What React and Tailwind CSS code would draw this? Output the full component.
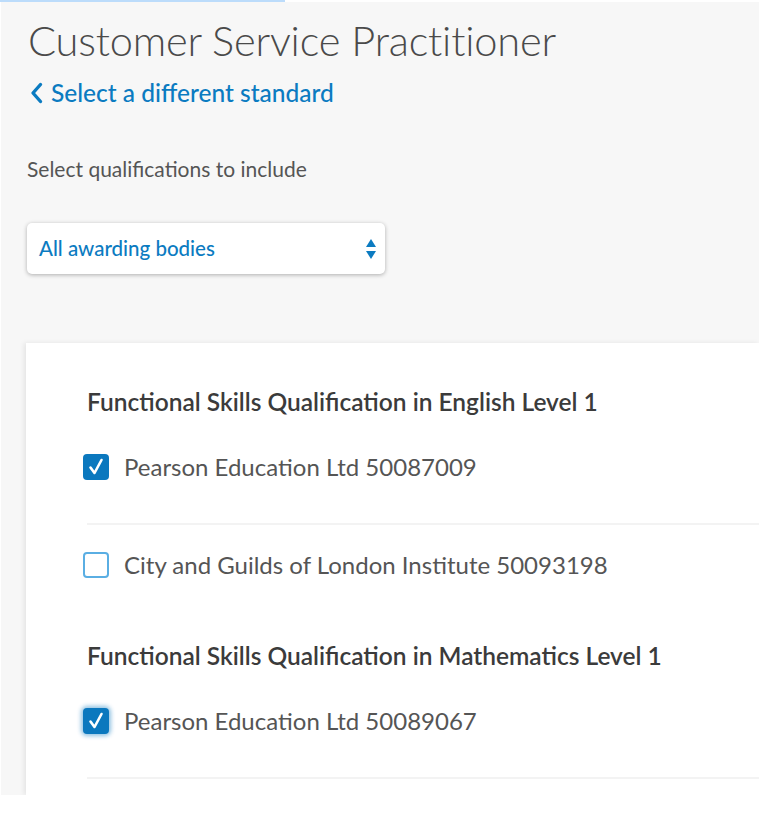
const groups = [
  {
    title: 'Functional Skills Qualification in English Level 1',
    items: [
      { label: 'Pearson Education Ltd 50087009', checked: true },
      { label: 'City and Guilds of London Institute 50093198', checked: false },
    ],
  },
  {
    title: 'Functional Skills Qualification in Mathematics Level 1',
    items: [{ label: 'Pearson Education Ltd 50089067', checked: true, focus: true, last: true }],
  },
]

function Checkbox({ checked, focus }) {
  if (!checked) {
    return <span className="w-[26px] h-[26px] rounded-[4px] border-2 border-[#5aaee3] bg-white flex-shrink-0" />
  }
  return (
    <span
      className={`w-[26px] h-[26px] rounded-[4px] bg-[#0b78be] flex items-center justify-center flex-shrink-0 ${
        focus ? 'shadow-[0_0_4px_2px_rgba(11,120,190,0.45)]' : ''
      }`}
    >
      <svg width="16" height="18" viewBox="0 0 16 18" fill="none">
        <path d="M2.5 9.5 L6.5 15 L13.5 2" stroke="white" strokeWidth="2.6" strokeLinecap="round" strokeLinejoin="round" />
      </svg>
    </span>
  )
}

export default function App() {
  return (
    <div className="w-[762px] h-[822px] bg-white overflow-hidden" style={{ fontFamily: 'Lato, "Open Sans", sans-serif' }}>
      <div className="w-[285px] h-[2px] bg-[#bcdcfb]" />
      <div className="ml-[1px] w-[758px] h-[793px] bg-[#f7f7f7] flex flex-col overflow-hidden">
        <h1 className="ml-[27px] mt-[14px] text-[41.6px] leading-[48px] font-light text-[#4a4a4a] tracking-[-0.2px]">
          Customer Service Practitioner
        </h1>
        <a className="ml-[29px] mt-[14px] flex items-center gap-[8px] text-[#0b7bc1] text-[24.5px] leading-[30px] font-medium">
          <svg width="13" height="22" viewBox="0 0 13 22" fill="none">
            <path d="M10.5 2.5 L3 11 L10.5 19.5" stroke="#0b7bc1" strokeWidth="3.4" strokeLinecap="round" strokeLinejoin="round" />
          </svg>
          Select a different standard
        </a>
        <p className="ml-[26px] mt-[47px] text-[21px] leading-[28px] text-[#555555]">Select qualifications to include</p>
        <div className="ml-[26px] mt-[40px] w-[358px] h-[51px] bg-white rounded-[5px] shadow-[0_1px_4px_rgba(0,0,0,0.3)] flex items-center justify-between pl-[12px] pr-[8px]">
          <span className="text-[20.5px] text-[#0b7bc1] font-medium">All awarding bodies</span>
          <svg width="12" height="24" viewBox="0 0 12 24">
            <path d="M6 2 L11 10 L1 10 Z" fill="#0b7bc1" />
            <path d="M6 22 L11 14 L1 14 Z" fill="#0b7bc1" />
          </svg>
        </div>
        <div className="ml-[25px] mt-[69px] flex-1 bg-white shadow-[-2px_0_5px_rgba(0,0,0,0.08)] pl-[61px] pt-[44px]">
          {groups.map((g, gi) => (
            <div key={gi} className={gi > 0 ? 'mt-[61px]' : ''}>
              <h2 className="text-[24.5px] leading-[30px] font-semibold text-[#3b3b3b]">{g.title}</h2>
              {g.items.map((it, ii) => (
                <div key={ii}>
                  <div className={`flex items-center gap-[15px] -ml-[4px] ${ii === 0 ? 'mt-[35px]' : 'mt-[25px]'}`}>
                    <Checkbox checked={it.checked} focus={it.focus} />
                    <span className="text-[24px] leading-[30px] text-[#555555]">{it.label}</span>
                  </div>
                  {(ii < g.items.length - 1 || it.last) && <div className="mt-[41px] h-[2px] bg-[#f3f3f3]" />}
                </div>
              ))}
            </div>
          ))}
        </div>
      </div>
    </div>
  )
}
